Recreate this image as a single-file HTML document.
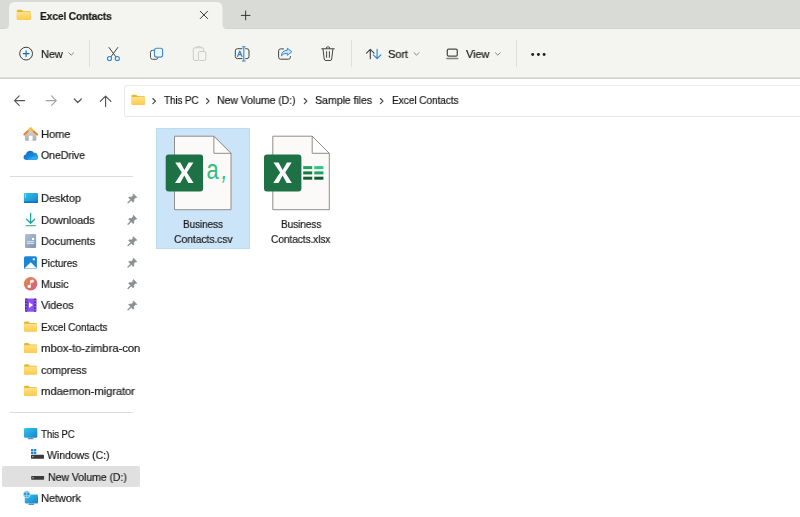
<!DOCTYPE html>
<html><head><meta charset="utf-8">
<style>
*{margin:0;padding:0;box-sizing:border-box}
html,body{width:800px;height:517px;overflow:hidden;background:#fff;font-family:"Liberation Sans",sans-serif;color:#1b1b1b}
.abs{position:absolute}
#title{left:0;top:0;width:800px;height:29px;background:#d9dcd6}
#toolbar{left:0;top:29px;width:800px;height:49px;background:#f4f5f1}
#tbline{left:0;top:77px;width:800px;height:2px;background:linear-gradient(#e6e7e4,#cbccc9)}
#addr{left:124px;top:85px;width:690px;height:32px;border:1px solid #eaeaea;border-bottom-color:#e6e6e6;border-radius:3px;background:#fff}
.t{position:absolute;white-space:nowrap;font-size:11.6px;line-height:14px;color:#1a1a1a;transform-origin:0 0;letter-spacing:-0.15px;will-change:transform;-webkit-text-stroke:0.2px #1a1a1a}
.sep{position:absolute;width:1px;background:#dfe0dd}
#sidesel{left:2px;top:466px;width:138px;height:21px;background:#e0e0e0;border-radius:2px}
.hr{position:absolute;left:10px;width:123px;height:1px;background:#dcdcdc}
#sel{left:156px;top:128px;width:93.5px;height:120.5px;background:#cce4f7;border:1px solid #bcdcf4}
#ic{position:absolute;left:0;top:0;width:800px;height:517px;overflow:visible}
</style></head><body>
<div id="title" class="abs"></div>
<div class="abs" style="left:0;top:28px;width:800px;height:1px;background:#d2d5cf"></div>
<div id="toolbar" class="abs"></div>
<div id="tbline" class="abs"></div>
<div id="addr" class="abs"></div>
<div class="sep" style="left:89px;top:40px;height:27px"></div>
<div class="sep" style="left:351px;top:40px;height:27px"></div>
<div class="sep" style="left:516px;top:40px;height:27px"></div>
<div id="sidesel" class="abs"></div>
<div class="hr" style="top:176px"></div>
<div class="hr" style="top:412px"></div>
<div id="sel" class="abs"></div>

<svg id="ic" viewBox="0 0 800 517">
<defs>
<linearGradient id="gf" x1="0" y1="0" x2="0" y2="1"><stop offset="0" stop-color="#ffe28a"/><stop offset="1" stop-color="#ffcb4a"/></linearGradient>
<linearGradient id="gdesk" x1="0" y1="0" x2="1" y2="1"><stop offset="0" stop-color="#35c6ea"/><stop offset="1" stop-color="#1680cc"/></linearGradient>
<linearGradient id="gdoc" x1="0" y1="0" x2="1" y2="1"><stop offset="0" stop-color="#b3c3d6"/><stop offset="1" stop-color="#7b93b2"/></linearGradient>
<linearGradient id="gmus" x1="0" y1="0" x2="1" y2="1"><stop offset="0" stop-color="#ee8a45"/><stop offset="1" stop-color="#cb5a8a"/></linearGradient>
<linearGradient id="ghome" x1="0" y1="0" x2="0" y2="1"><stop offset="0" stop-color="#d9d9d9"/><stop offset="1" stop-color="#adadad"/></linearGradient>
<linearGradient id="gcloud" x1="0" y1="0" x2="1" y2="1"><stop offset="0" stop-color="#0c63c4"/><stop offset="1" stop-color="#2aa5ea"/></linearGradient>
<g id="folder">
  <path d="M0 1.1 Q0 0 1.1 0 H4.2 Q4.8 0 5.3 .5 L6.3 1.5 H12.8 Q13.9 1.5 13.9 2.6 V9 Q13.9 10.1 12.8 10.1 H1.1 Q0 10.1 0 9 Z" fill="#e9b52a"/>
  <rect x="0" y="2.3" width="13.9" height="7.8" rx="1" fill="url(#gf)"/>
</g>
<g id="pin">
  <path d="M5.6 0.3 L9 3.7 L8.2 4.3 L7.6 4 L5.9 5.9 L6.1 8 L5.3 8.6 L3.4 6.7 L0.6 9.5 L0 9.5 L0 8.9 L2.8 6.1 L0.9 4.2 L1.5 3.4 L3.6 3.6 L5.5 1.9 L5.2 1.2 Z" fill="#8b9094" stroke="#8b9094" stroke-width="0.7" stroke-linejoin="round"/>
</g>
<g id="chev"><path d="M0 0 L2.4 2.4 L4.8 0" fill="none" stroke="#777" stroke-width="0.9" stroke-linecap="round" stroke-linejoin="round"/></g>
<g id="bc"><path d="M0 0 L2.6 2.6 L0 5.2" fill="none" stroke="#444" stroke-width="1.15" stroke-linecap="round" stroke-linejoin="round"/></g>
</defs>

<!-- tab -->
<path d="M4.5 29 Q9 29 9 24.5 V8 Q9 2 15 2 H216.5 Q222.5 2 222.5 8 V24.5 Q222.5 29 227 29 Z" fill="#f4f5f1"/>
<use href="#folder" x="16.8" y="9.8"/>
<path d="M200.2 11.2 L207.6 18.6 M207.6 11.2 L200.2 18.6" stroke="#2b2b2b" stroke-width="0.95" stroke-linecap="round"/>
<path d="M241.3 15.4 H250 M245.65 11 V19.8" stroke="#2b2b2b" stroke-width="0.95" stroke-linecap="round"/>

<!-- toolbar icons -->
<circle cx="26.1" cy="53.6" r="6.4" fill="none" stroke="#3d3d3d" stroke-width="1"/>
<path d="M23.2 53.6 H29 M26.1 50.7 V56.5" stroke="#0a6cc9" stroke-width="1.15" stroke-linecap="round"/>
<use href="#chev" x="68.8" y="52.8"/>
<!-- scissors -->
<path d="M109 47.5 L115.8 56.7 M117.8 47.5 L111 56.7" stroke="#444" stroke-width="1" stroke-linecap="round"/>
<circle cx="109.5" cy="58.5" r="2.05" fill="none" stroke="#2b86d9" stroke-width="1.1"/>
<circle cx="117.3" cy="58.5" r="2.05" fill="none" stroke="#2b86d9" stroke-width="1.1"/>
<!-- copy -->
<path d="M153.6 50.3 H152.5 Q150.5 50.3 150.5 52.3 V57.3 Q150.5 59.3 152.5 59.3 H156 Q157.8 59.3 158 57.8" fill="none" stroke="#555" stroke-width="1" stroke-linecap="round"/>
<rect x="154.5" y="48.2" width="8.1" height="8.9" rx="2" fill="none" stroke="#3b8fd9" stroke-width="1.15"/>
<!-- paste (disabled) -->
<g fill="none" stroke="#c9cbc9" stroke-width="1">
<path d="M198 60.5 H194.8 Q193.3 60.5 193.3 59 V49.3 Q193.3 47.8 194.8 47.8 H202.2 Q203.7 47.8 203.7 49.3 V51"/>
<rect x="198.4" y="51.5" width="7.4" height="9" rx="1.4"/>
<path d="M196 48 Q196 46.6 197.4 46.6 H199.6 Q201 46.6 201 48"/>
</g>
<!-- rename -->
<path d="M242 48.7 H237.5 Q235.3 48.7 235.3 50.9 V56.4 Q235.3 58.6 237.5 58.6 H242 M245.6 48.7 H246.8 Q249 48.7 249 50.9 V56.4 Q249 58.6 246.8 58.6 H245.6" fill="none" stroke="#444" stroke-width="1" stroke-linecap="round"/>
<path d="M243.8 46.9 V60.8 M242.4 46.7 H245.2 M242.4 61 H245.2" stroke="#2b86d9" stroke-width="1.1" stroke-linecap="round"/>
<path d="M237.6 56.4 L239.8 51.1 L242 56.4 M238.3 54.7 H241.3" fill="none" stroke="#2b86d9" stroke-width="1.2" stroke-linecap="round" stroke-linejoin="round"/>
<!-- share -->
<path d="M283.5 48.9 H280.6 Q278.6 48.9 278.6 50.9 V57.2 Q278.6 59.2 280.6 59.2 H288.4 Q290.4 59.2 290.4 57.2 V56.5" fill="none" stroke="#444" stroke-width="1" stroke-linecap="round"/>
<path d="M287.3 48.2 L291.9 51.7 L287.3 55.3 V53.3 Q283.5 52.9 281.4 55.9 Q281.7 50.6 287.3 50.2 Z" fill="#cfe4f7" stroke="#2b86d9" stroke-width="0.95" stroke-linejoin="round"/>
<!-- trash -->
<path d="M321.7 48.8 H334.2 M326 48.6 Q326 46.8 328 46.8 Q330 46.8 330 48.6 M323 49 L324.2 59 Q324.4 60.5 325.9 60.5 H330 Q331.5 60.5 331.7 59 L332.9 49 M326.6 51.6 V57.4 M329.4 51.6 V57.4" fill="none" stroke="#444" stroke-width="1" stroke-linecap="round" stroke-linejoin="round"/>
<!-- sort -->
<path d="M370.3 49.5 V58.6 M366.5 53.2 L370.3 49.4 L374.1 53.2" fill="none" stroke="#444" stroke-width="1.15" stroke-linecap="round" stroke-linejoin="round"/>
<path d="M377.1 49.4 V58.5 M373.3 54.8 L377.1 58.6 L380.9 54.8" fill="none" stroke="#2b86d9" stroke-width="1.15" stroke-linecap="round" stroke-linejoin="round"/>
<use href="#chev" x="414.1" y="52.8"/>
<!-- view -->
<rect x="447.3" y="49.1" width="10" height="7" rx="1.4" fill="none" stroke="#4a4a4a" stroke-width="1.25"/>
<path d="M446.9 58.4 H457.7" stroke="#808080" stroke-width="1.5" stroke-linecap="round"/>
<use href="#chev" x="495.4" y="52.8"/>
<circle cx="532.7" cy="54.5" r="1.45" fill="#1c1c1c"/><circle cx="538.4" cy="54.5" r="1.45" fill="#1c1c1c"/><circle cx="544.1" cy="54.5" r="1.45" fill="#1c1c1c"/>

<!-- nav arrows -->
<path d="M24.6 100.6 H14.6 M19.2 95.9 L14.5 100.6 L19.2 105.3" fill="none" stroke="#555" stroke-width="1.15" stroke-linecap="round" stroke-linejoin="round"/>
<path d="M46.1 100.6 H56.2 M51.6 95.9 L56.3 100.6 L51.6 105.3" fill="none" stroke="#a2a2a2" stroke-width="1.15" stroke-linecap="round" stroke-linejoin="round"/>
<path d="M74.3 99 L77.8 102.5 L81.3 99" fill="none" stroke="#555" stroke-width="1.2" stroke-linecap="round" stroke-linejoin="round"/>
<path d="M105.6 106.6 V96.2 M100.3 101.4 L105.6 96.1 L110.9 101.4" fill="none" stroke="#555" stroke-width="1.15" stroke-linecap="round" stroke-linejoin="round"/>

<!-- address -->
<use href="#folder" x="131.6" y="94.7" transform="translate(131.6 94.7) scale(0.96 1.0) translate(-131.6 -94.7)"/>
<use href="#bc" x="152.9" y="98.5"/>
<use href="#bc" x="206.5" y="98.5"/>
<use href="#bc" x="304.3" y="98.5"/>
<use href="#bc" x="380.4" y="98.5"/>

<!-- sidebar icons -->
<!-- home -->
<path d="M24.9 134.6 L30.6 129 L36.4 134.6 V139.6 Q36.4 140.7 35.3 140.7 H26 Q24.9 140.7 24.9 139.6 Z" fill="url(#ghome)"/>
<rect x="28.8" y="135.7" width="3.8" height="5.1" fill="#fff"/>
<path d="M24.3 134.5 L30.65 128.4 L37.1 134.5" fill="none" stroke="#e1862a" stroke-width="2" stroke-linecap="round" stroke-linejoin="round"/>
<path d="M28.6 130.4 L30.65 128.4 L32.8 130.4" fill="none" stroke="#f5c244" stroke-width="2" stroke-linecap="round" stroke-linejoin="round"/>
<!-- onedrive -->
<path d="M26.6 159.9 Q23.5 159.9 23.5 157 Q23.5 154.6 26 154.2 Q26.8 150.7 30.3 150.7 Q32.7 150.7 33.9 152.8 Q34.4 152.6 35 152.7 Q37.2 153 37.6 155.2 Q38.3 156 38.2 157.3 Q38 159.9 35.4 159.9 Z" fill="url(#gcloud)"/>
<path d="M27.5 159.9 Q30 156 38 156.2 Q38.5 159.9 35.4 159.9 Z" fill="#2fb0f0" opacity=".75"/>
<!-- desktop -->
<rect x="23.9" y="193" width="14.1" height="10" rx="1" fill="url(#gdesk)"/>
<path d="M23.9 201.5 H38 V202 Q38 203 37 203 H24.9 Q23.9 203 23.9 202 Z" fill="#1370b8"/>
<rect x="25" y="194.3" width="1" height="1" fill="#e6f6fd"/><rect x="25" y="196.3" width="1" height="1" fill="#e6f6fd"/>
<!-- downloads -->
<path d="M30.6 213.4 V223 M26.6 219.3 L30.6 223.3 L34.6 219.3" fill="none" stroke="#1fa59b" stroke-width="1.3" stroke-linecap="round" stroke-linejoin="round"/>
<path d="M26.2 225.6 H35.3" stroke="#55b888" stroke-width="1.3" stroke-linecap="round"/>
<!-- documents -->
<rect x="25" y="234.1" width="11.1" height="13.8" rx="1" fill="url(#gdoc)"/>
<rect x="32" y="237.9" width="2.2" height="2.2" fill="#fff"/>
<path d="M27 241.7 H34.2 M27 243.4 H34.2" stroke="#e9eff6" stroke-width="0.9"/>
<!-- pictures -->
<rect x="24" y="256.3" width="12.9" height="12.6" rx="1.5" fill="#1b86d8"/>
<path d="M25 268.2 L30.8 262.6 L36.4 268.2 Z" fill="#fff" stroke="#fff" stroke-width=".6" stroke-linejoin="round"/>
<circle cx="33.8" cy="259.3" r="1.15" fill="#fff"/>
<!-- music -->
<circle cx="30.6" cy="283.7" r="6.8" fill="url(#gmus)"/>
<circle cx="29.2" cy="286.4" r="1.7" fill="#fff"/>
<path d="M30.4 286.4 V280.6 L33.4 279.9 V282 L30.4 282.7" fill="#fff" stroke="#fff" stroke-width=".6" stroke-linejoin="round"/>
<!-- videos -->
<rect x="25" y="298.4" width="11.3" height="13.4" rx="1" fill="#8d52f2"/>
<rect x="25" y="298.4" width="2.4" height="13.4" rx=".8" fill="#5a2fb6"/><rect x="33.9" y="298.4" width="2.4" height="13.4" rx=".8" fill="#5a2fb6"/>
<g fill="#a77bf5"><rect x="25.6" y="300" width="1.2" height="1.3"/><rect x="25.6" y="303" width="1.2" height="1.3"/><rect x="25.6" y="306" width="1.2" height="1.3"/><rect x="25.6" y="309" width="1.2" height="1.3"/><rect x="34.5" y="300" width="1.2" height="1.3"/><rect x="34.5" y="303" width="1.2" height="1.3"/><rect x="34.5" y="306" width="1.2" height="1.3"/><rect x="34.5" y="309" width="1.2" height="1.3"/></g>
<path d="M29 302.2 L33 305.1 L29 308 Z" fill="#fff"/>
<!-- folders -->
<use href="#folder" x="24.1" y="321.5" transform="translate(24.1 0) scale(0.92 1) translate(-24.1 0)"/>
<use href="#folder" x="24.1" y="342.9" transform="translate(24.1 0) scale(0.92 1) translate(-24.1 0)"/>
<use href="#folder" x="24.1" y="364.3" transform="translate(24.1 0) scale(0.92 1) translate(-24.1 0)"/>
<use href="#folder" x="24.1" y="385.7" transform="translate(24.1 0) scale(0.92 1) translate(-24.1 0)"/>
<!-- pins -->
<use href="#pin" x="127.8" y="193.6"/>
<use href="#pin" x="127.8" y="215"/>
<use href="#pin" x="127.8" y="236.4"/>
<use href="#pin" x="127.8" y="257.8"/>
<use href="#pin" x="127.8" y="279.2"/>
<use href="#pin" x="127.8" y="300.6"/>
<!-- this pc -->
<rect x="24" y="428.1" width="13.3" height="9.7" rx="1.2" fill="url(#gdesk)"/>
<path d="M28.6 437.8 H32.8 L33.8 439.3 H27.6 Z" fill="#5c8fb3"/>
<!-- windows c -->
<g fill="#1a86d8"><rect x="31" y="449.1" width="2.4" height="2.2"/><rect x="33.9" y="449.1" width="2.4" height="2.2"/><rect x="31" y="451.8" width="2.4" height="2.2"/><rect x="33.9" y="451.8" width="2.4" height="2.2"/></g>
<rect x="31" y="454.8" width="13" height="3.9" rx=".6" fill="#3a3a3a"/>
<rect x="32.2" y="456.2" width="1.3" height="1" fill="#ddd"/>
<!-- new volume d -->
<rect x="31.2" y="476" width="12.9" height="3.7" rx=".6" fill="#3a3a3a"/>
<rect x="32.4" y="477.3" width="1.3" height="1" fill="#ddd"/>
<!-- network -->
<rect x="24.8" y="494.6" width="13.2" height="8.9" rx="1.2" fill="url(#gdesk)"/>
<path d="M29.2 503.5 H33.4 L34.4 505 H28.2 Z" fill="#5c8fb3"/>
<circle cx="26.7" cy="494.2" r="3.5" fill="#2b95dd" stroke="#fff" stroke-width=".7"/>
<path d="M24.2 492.6 Q26.7 491.6 29.2 492.6 M24 495.2 Q26.7 496.4 29.4 495.2 M26.7 490.8 V497.6" fill="none" stroke="#c9e8fa" stroke-width=".6"/>

<!-- file icons -->
<g id="xl">
<path d="M174.5 136.2 H213.9 L231 153.3 V209.7 H174.5 Z" fill="#fbfaf8" stroke="#8e8e8e" stroke-width="1" stroke-linejoin="round"/>
<path d="M213.9 136.2 V153.3 H231 Z" fill="#fdfdfc" stroke="#8e8e8e" stroke-width="1" stroke-linejoin="round"/>
<rect x="165.7" y="154.4" width="37.4" height="37.2" rx="3" fill="#1e7145"/>
<path d="M175.2 162.4 H180.3 L184.4 169.9 L188.6 162.4 H193.4 L186.9 172.6 L193.6 183 H188.4 L184.3 175.5 L180.2 183 H175 L181.8 172.6 Z" fill="#fff"/>
</g>
<use href="#xl" x="98.3" y="0"/>
<!-- grid for xlsx -->
<rect x="303.2" y="166.1" width="9" height="3" fill="#21a366"/><rect x="314.3" y="166.1" width="9.1" height="3" fill="#33c481"/>
<rect x="303.2" y="171.4" width="9" height="3" fill="#107c41"/><rect x="314.3" y="171.4" width="9.1" height="3" fill="#21a366"/>
<rect x="303.2" y="176.7" width="9" height="3" fill="#185c37"/><rect x="314.3" y="176.7" width="9.1" height="3" fill="#0f5a31"/>
<!-- a, for csv -->
<text x="206.4" y="179.4" font-family="Liberation Sans, sans-serif" font-size="27" fill="#35bd80" transform="translate(206.4 0) scale(0.81 1) translate(-206.4 0)">a</text><text x="220.6" y="179.4" font-family="Liberation Sans, sans-serif" font-size="27" fill="#35bd80" transform="translate(220.6 179.4) skewX(-8) scale(0.8 1.05) translate(-220.6 -179.4)">,</text>
</svg>

<div class="t" style="left:39.50px;top:8.58px;transform:scaleX(0.8836);font-weight:bold;">Excel Contacts</div>
<div class="t" style="left:40.70px;top:46.58px;transform:scaleX(0.9538);">New</div>
<div class="t" style="left:387.60px;top:46.58px;transform:scaleX(0.9627);">Sort</div>
<div class="t" style="left:466.00px;top:46.58px;transform:scaleX(0.9618);">View</div>
<div class="t" style="left:163.80px;top:93.38px;transform:scaleX(0.8585);">This PC</div>
<div class="t" style="left:217.30px;top:93.38px;transform:scaleX(0.9183);">New Volume (D:)</div>
<div class="t" style="left:315.30px;top:93.38px;transform:scaleX(0.9273);">Sample files</div>
<div class="t" style="left:391.90px;top:93.38px;transform:scaleX(0.8839);">Excel Contacts</div>
<div class="t" style="left:40.70px;top:127.08px;transform:scaleX(0.9694);">Home</div>
<div class="t" style="left:40.70px;top:148.49px;transform:scaleX(0.9188);">OneDrive</div>
<div class="t" style="left:40.70px;top:191.31px;transform:scaleX(0.9594);">Desktop</div>
<div class="t" style="left:40.70px;top:212.72px;transform:scaleX(0.9569);">Downloads</div>
<div class="t" style="left:40.70px;top:234.13px;transform:scaleX(0.9425);">Documents</div>
<div class="t" style="left:40.70px;top:255.54px;transform:scaleX(0.8922);">Pictures</div>
<div class="t" style="left:40.70px;top:276.95px;transform:scaleX(0.9278);">Music</div>
<div class="t" style="left:40.50px;top:298.36px;transform:scaleX(0.9463);">Videos</div>
<div class="t" style="left:40.70px;top:319.77px;transform:scaleX(0.8826);">Excel Contacts</div>
<div class="t" style="left:40.70px;top:341.18px;transform:scaleX(0.9881);">mbox-to-zimbra-con</div>
<div class="t" style="left:40.70px;top:362.59px;transform:scaleX(0.9274);">compress</div>
<div class="t" style="left:40.70px;top:384.00px;transform:scaleX(0.9817);">mdaemon-migrator</div>
<div class="t" style="left:40.90px;top:426.82px;transform:scaleX(0.8361);">This PC</div>
<div class="t" style="left:47.40px;top:448.23px;transform:scaleX(0.9206);">Windows (C:)</div>
<div class="t" style="left:47.80px;top:469.64px;transform:scaleX(0.9218);">New Volume (D:)</div>
<div class="t" style="left:40.70px;top:491.05px;transform:scaleX(0.9618);">Network</div>
<div class="t" style="left:182.80px;top:217.28px;transform:scaleX(0.8682);">Business</div>
<div class="t" style="left:173.80px;top:231.58px;transform:scaleX(0.9059);">Contacts.csv</div>
<div class="t" style="left:281.20px;top:217.28px;transform:scaleX(0.8769);">Business</div>
<div class="t" style="left:271.30px;top:231.58px;transform:scaleX(0.8851);">Contacts.xlsx</div>
</body></html>
